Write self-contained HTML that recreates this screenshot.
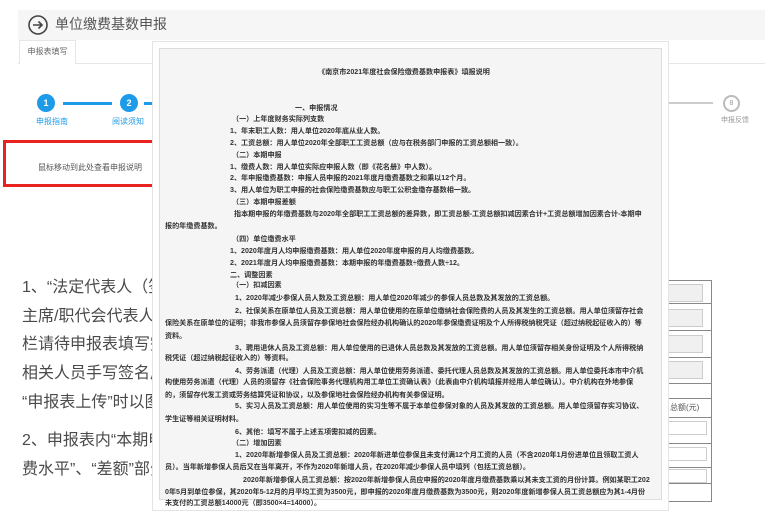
<!DOCTYPE html>
<html><head><meta charset="utf-8"><style>
*{margin:0;padding:0;box-sizing:border-box}
body{width:765px;height:503px;background:#fff;position:relative;overflow:hidden;font-family:"Liberation Sans","Noto Sans CJK SC",sans-serif;color:#555}
.a{position:absolute;white-space:nowrap}
.hdr{position:absolute;left:18px;top:10px;width:747px;height:30px;background:#f6f6f6}
.tabline{position:absolute;left:18px;top:63px;width:747px;height:1px;background:#e6e6e6}
.tab{position:absolute;left:19px;top:40px;width:57px;height:24px;background:#fff;border:1px solid #e6e6e6;border-bottom:none;font-size:8px;color:#666;text-align:center;line-height:22px}
.c{position:absolute;width:18px;height:18px;border-radius:50%;background:#1e9be8;color:#fff;font-size:9px;text-align:center;line-height:18px;font-weight:bold}
.big{position:absolute;left:22px;font-size:16px;color:#4a4a4a;white-space:nowrap}
.pop{position:absolute;left:152px;top:41px;width:517px;height:470px;background:#fff;border:1px solid #e4e4e4}
.in{position:absolute;left:159px;top:48px;width:503px;height:452px;background:#f5f5f5;border:1px solid #dcdcdc}
.p{position:absolute;font-size:7.1px;color:#333;font-weight:bold;white-space:nowrap;line-height:8px}
.tbl{position:absolute;left:660px;top:280px;width:52px;height:222px;border:1px solid #888;border-left:none}
.r{position:absolute;left:660px;width:52px;height:1px;background:#888}
.ib{position:absolute;left:660px;width:43px;height:18px;border:1px solid #ccc;background:#f0f0f0}
.iw{position:absolute;left:660px;width:47px;height:14px;border:1px solid #ccc;background:#fff}
</style></head><body>
<div class="hdr"></div>
<svg class="a" style="left:27px;top:14px" width="22" height="22" viewBox="0 0 22 22"><circle cx="11" cy="11" r="9" fill="none" stroke="#444" stroke-width="1.6"/><path d="M6 11h9M11.5 7.5L15 11l-3.5 3.5" fill="none" stroke="#444" stroke-width="1.6"/></svg>
<div class="a" style="left:55px;top:14px;font-size:14px;color:#555">单位缴费基数申报</div>
<div class="tabline"></div>
<div class="tab">申报表填写</div>

<div class="c" style="left:37px;top:94px">1</div>
<div class="a" style="left:63px;top:102px;width:49px;height:3px;background:#1e9be8"></div>
<div class="c" style="left:120px;top:94px">2</div>
<div class="a" style="left:144px;top:102px;width:10px;height:3px;background:#1e9be8"></div>
<div class="a" style="left:36px;top:116px;font-size:8px;color:#1e9be8">申报指南</div>
<div class="a" style="left:112px;top:116px;font-size:8px;color:#1e9be8">阅读须知</div>
<div class="a" style="left:668px;top:102px;width:45px;height:2px;background:#ccc"></div>
<div class="a" style="left:723px;top:95px;width:17px;height:17px;border-radius:50%;border:2px solid #bbb;font-size:7px;color:#999;text-align:center;line-height:13px">8</div>
<div class="a" style="left:721px;top:115px;font-size:7px;color:#999">申报反馈</div>

<div class="a" style="left:3px;top:140px;width:183px;height:47px;border:3px solid #e8231f"></div>
<div class="a" style="left:38px;top:162px;font-size:8px;color:#555">鼠标移动到此处查看申报说明</div>

<div class="big" style="top:273px">1、“法定代表人（签</div>
<div class="big" style="top:302px">主席/职代会代表人</div>
<div class="big" style="top:330px">栏请待申报表填写完</div>
<div class="big" style="top:359px">相关人员手写签名后</div>
<div class="big" style="top:388px">“申报表上传”时以图</div>
<div class="big" style="top:426px">2、申报表内“本期申</div>
<div class="big" style="top:455px">费水平”、“差额”部分</div>

<div class="tbl"></div>
<div class="r" style="top:303px"></div><div class="r" style="top:330px"></div><div class="r" style="top:357px"></div><div class="r" style="top:383px"></div><div class="r" style="top:398px"></div><div class="r" style="top:417px"></div><div class="r" style="top:443px"></div><div class="r" style="top:467px"></div><div class="r" style="top:483px"></div>
<div class="ib" style="top:284px"></div><div class="ib" style="top:309px"></div><div class="ib" style="top:335px"></div><div class="ib" style="top:361px"></div>
<div class="a" style="left:670px;top:402px;font-size:8px;color:#555">总额(元)</div>
<div class="iw" style="top:421px"></div><div class="iw" style="top:447px"></div><div class="iw" style="top:469px"></div>

<div class="pop"></div>
<div class="in"></div>
<div class="p" style="left:318px;top:68px">《南京市2021年度社会保险缴费基数申报表》填报说明</div>
<div class="p" style="left:295px;top:104px">一、申报情况</div>
<div class="p" style="left:232px;top:115px">（一）上年度财务实际列支数</div>
<div class="p" style="left:230px;top:127px">1、年末职工人数：用人单位2020年底从业人数。</div>
<div class="p" style="left:230px;top:139px">2、工资总额：用人单位2020年全部职工工资总额（应与在税务部门申报的工资总额相一致）。</div>
<div class="p" style="left:232px;top:151px">（二）本期申报</div>
<div class="p" style="left:230px;top:163px">1、缴费人数：用人单位实际应申报人数（即《花名册》中人数）。</div>
<div class="p" style="left:230px;top:174px">2、年申报缴费基数：申报人员申报的2021年度月缴费基数之和乘以12个月。</div>
<div class="p" style="left:230px;top:186px">3、用人单位为职工申报的社会保险缴费基数应与职工公积金缴存基数相一致。</div>
<div class="p" style="left:232px;top:198px">（三）本期申报差额</div>
<div class="p" style="left:234px;top:210px">指本期申报的年缴费基数与2020年全部职工工资总额的差异数，即工资总额-工资总额扣减因素合计+工资总额增加因素合计-本期申</div>
<div class="p" style="left:165px;top:222px">报的年缴费基数。</div>
<div class="p" style="left:232px;top:235px">（四）单位缴费水平</div>
<div class="p" style="left:230px;top:247px">1、2020年度月人均申报缴费基数：用人单位2020年度申报的月人均缴费基数。</div>
<div class="p" style="left:230px;top:259px">2、2021年度月人均申报缴费基数：本期申报的年缴费基数÷缴费人数÷12。</div>
<div class="p" style="left:230px;top:271px">二、调整因素</div>
<div class="p" style="left:232px;top:281px">（一）扣减因素</div>
<div class="p" style="left:235px;top:294px">1、2020年减少参保人员人数及工资总额：用人单位2020年减少的参保人员总数及其发放的工资总额。</div>
<div class="p" style="left:235px;top:307px">2、社保关系在原单位人员及工资总额：用人单位使用的在原单位缴纳社会保险费的人员及其发生的工资总额。用人单位须留存社会</div>
<div class="p" style="left:165px;top:319px">保险关系在原单位的证明；非我市参保人员须留存参保地社会保险经办机构确认的2020年参保缴费证明及个人所得税纳税凭证（超过纳税起征收入的）等</div>
<div class="p" style="left:165px;top:332px">资料。</div>
<div class="p" style="left:235px;top:344px">3、聘用退休人员及工资总额：用人单位使用的已退休人员总数及其发放的工资总额。用人单位须留存相关身份证明及个人所得税纳</div>
<div class="p" style="left:165px;top:354px">税凭证（超过纳税起征收入的）等资料。</div>
<div class="p" style="left:235px;top:367px">4、劳务派遣（代理）人员及工资总额：用人单位使用劳务派遣、委托代理人员总数及其发放的工资总额。用人单位委托本市中介机</div>
<div class="p" style="left:165px;top:378px">构使用劳务派遣（代理）人员的须留存《社会保险事务代理机构用工单位工资确认表》（此表由中介机构填报并经用人单位确认）。中介机构在外地参保</div>
<div class="p" style="left:165px;top:391px">的，须留存代发工资或劳务结算凭证和协议，以及参保地社会保险经办机构有关参保证明。</div>
<div class="p" style="left:235px;top:402px">5、实习人员及工资总额：用人单位使用的实习生等不属于本单位参保对象的人员及其发放的工资总额。用人单位须留存实习协议、</div>
<div class="p" style="left:165px;top:415px">学生证等相关证明材料。</div>
<div class="p" style="left:235px;top:428px">6、其他：填写不属于上述五项需扣减的因素。</div>
<div class="p" style="left:232px;top:439px">（二）增加因素</div>
<div class="p" style="left:235px;top:451px">1、2020年新增参保人员及工资总额：2020年新进单位参保且未支付满12个月工资的人员（不含2020年1月份进单位且领取工资人</div>
<div class="p" style="left:165px;top:463px">员）。当年新增参保人员后又在当年离开，不作为2020年新增人员，在2020年减少参保人员中填列（包括工资总额）。</div>
<div class="p" style="left:243px;top:476px">2020年新增参保人员工资总额：按2020年新增参保人员应申报的2020年度月缴费基数乘以其未支工资的月份计算。例如某职工202</div>
<div class="p" style="left:165px;top:488px">0年5月到单位参保，其2020年5-12月的月平均工资为3500元，即申报的2020年度月缴费基数为3500元，则2020年度新增参保人员工资总额应为其1-4月份</div>
<div class="p" style="left:165px;top:499px">未支付的工资总额14000元（即3500×4=14000）。</div>
</body></html>
